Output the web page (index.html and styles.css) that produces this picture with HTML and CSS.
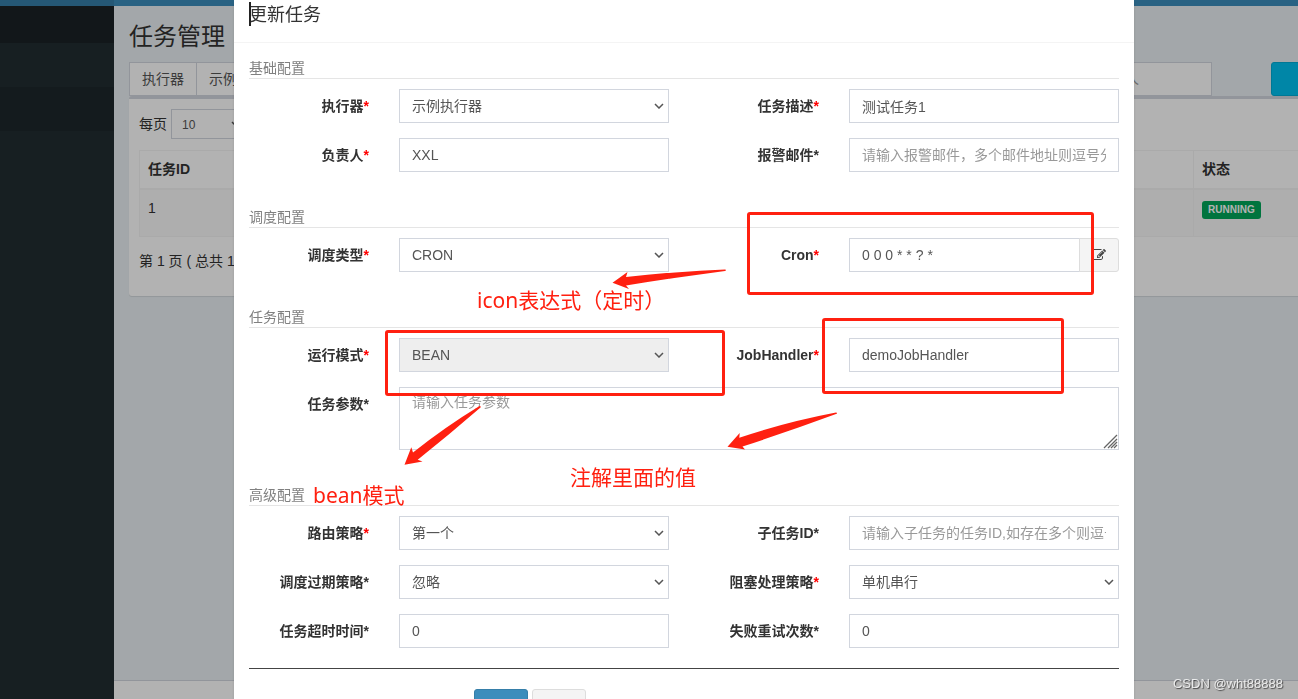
FILE: index.html
```html
<!DOCTYPE html>
<html lang="zh-CN">
<head>
<meta charset="utf-8">
<title>任务管理</title>
<link rel="stylesheet" href="styles.css">
</head>
<body>
<div class="app">
  <aside class="sidebar">
    <div class="sidebar-logo"></div>
    <div class="sidebar-header"></div>
    <div class="sidebar-item"></div>
    <div class="sidebar-item active"></div>
  </aside>
  <div class="main">
    <div class="navbar"></div>
    <main class="content">
      <h1 class="page-title">任务管理</h1>
      <div class="filters">
        <div class="input-group filter-executor">
          <label class="addon" for="f-executor">执行器</label>
          <select class="control" id="f-executor"><option>示例执行器</option></select>
        </div>
        <div class="input-group filter-owner">
          <label class="addon" for="f-owner">负责人</label>
          <input class="control" id="f-owner" type="text" placeholder="请输入负责人">
        </div>
        <button class="btn btn-info" type="button" aria-label="搜索"></button>
      </div>
      <section class="box">
        <div class="page-size">
          <label for="page-size">每页</label>
          <select class="control control-sm" id="page-size"><option>10</option></select>
        </div>
        <table class="jobs">
          <thead><tr><th>任务ID</th><th class="col-status">状态</th></tr></thead>
          <tbody><tr><td>1</td><td class="col-status"><span class="badge">RUNNING</span></td></tr></tbody>
        </table>
        <p class="summary">第 1 页 ( 总共 1 页 )</p>
      </section>
    </main>
    <footer class="footer"></footer>
  </div>
</div>

<div class="backdrop">
  <div class="modal" role="dialog" aria-labelledby="modal-title">
    <header class="modal-header"><h2 class="modal-title" id="modal-title">更新任务</h2></header>
    <form class="modal-body">
      <section class="group">
        <h3 class="group-title">基础配置</h3>
        <div class="form-row">
          <label for="executor">执行器<span class="req">*</span></label>
          <div class="field"><select class="control" id="executor"><option>示例执行器</option></select></div>
          <label for="desc">任务描述<span class="req">*</span></label>
          <div class="field"><input class="control" id="desc" type="text" value="测试任务1"></div>
        </div>
        <div class="form-row">
          <label for="owner">负责人<span class="req">*</span></label>
          <div class="field"><input class="control" id="owner" type="text" value="XXL"></div>
          <label for="mail">报警邮件<span>*</span></label>
          <div class="field"><input class="control" id="mail" type="text" placeholder="请输入报警邮件，多个邮件地址则逗号分隔"></div>
        </div>
      </section>
      <section class="group">
        <h3 class="group-title">调度配置</h3>
        <div class="form-row">
          <label for="schedule">调度类型<span class="req">*</span></label>
          <div class="field"><select class="control" id="schedule"><option>CRON</option></select></div>
          <label for="cron">Cron<span class="req">*</span></label>
          <div class="field input-group">
            <input class="control" id="cron" type="text" value="0 0 0 * * ? *">
            <button class="btn btn-default btn-addon" type="button" aria-label="编辑 Cron">
              <svg class="icon" viewBox="0 0 1792 1792" aria-hidden="true"><path d="M888 1184l116-116-152-152-116 116v56h96v96h56zm440-720q-16-16-33 1l-350 350q-17 17-1 33t33-1l350-350q17-17 1-33zm80 594v190q0 119-84.500 203.500t-203.500 84.500h-832q-119 0-203.500-84.500t-84.500-203.500v-832q0-119 84.500-203.500t203.500-84.500h832q63 0 117 25 15 7 18 23 3 17-9 29l-49 49q-14 14-32 8-23-6-45-6h-832q-66 0-113 47t-47 113v832q0 66 47 113t113 47h832q66 0 113-47t47-113v-126q0-13 9-22l64-64q15-15 35-7t20 29zm-96-738l288 288-672 672h-288v-288zm444 132l-92 92-288-288 92-92q28-28 68-28t68 28l152 152q28 28 28 68t-28 68z"/></svg>
            </button>
          </div>
        </div>
      </section>
      <section class="group">
        <h3 class="group-title">任务配置</h3>
        <div class="form-row">
          <label for="mode">运行模式<span class="req">*</span></label>
          <div class="field"><select class="control" id="mode" disabled><option>BEAN</option></select></div>
          <label for="handler">JobHandler<span class="req">*</span></label>
          <div class="field"><input class="control" id="handler" type="text" value="demoJobHandler"></div>
        </div>
        <div class="form-row">
          <label for="params">任务参数<span>*</span></label>
          <div class="field field-wide"><textarea class="control" id="params" placeholder="请输入任务参数"></textarea></div>
        </div>
      </section>
      <section class="group">
        <h3 class="group-title">高级配置</h3>
        <div class="form-row">
          <label for="route">路由策略<span class="req">*</span></label>
          <div class="field"><select class="control" id="route"><option>第一个</option></select></div>
          <label for="child">子任务ID<span>*</span></label>
          <div class="field"><input class="control" id="child" type="text" placeholder="请输入子任务的任务ID,如存在多个则逗号分隔"></div>
        </div>
        <div class="form-row">
          <label for="misfire">调度过期策略<span>*</span></label>
          <div class="field"><select class="control" id="misfire"><option>忽略</option></select></div>
          <label for="block">阻塞处理策略<span class="req">*</span></label>
          <div class="field"><select class="control" id="block"><option>单机串行</option></select></div>
        </div>
        <div class="form-row">
          <label for="timeout">任务超时时间<span>*</span></label>
          <div class="field"><input class="control" id="timeout" type="text" value="0"></div>
          <label for="retry">失败重试次数<span>*</span></label>
          <div class="field"><input class="control" id="retry" type="text" value="0"></div>
        </div>
      </section>
      <div class="actions">
        <button class="btn btn-action btn-primary" type="button" aria-label="保存"></button>
        <button class="btn btn-action btn-default" type="button" aria-label="取消"></button>
      </div>
    </form>

    <div class="mark mark-cron"></div>
    <div class="mark mark-mode"></div>
    <div class="mark mark-handler"></div>
    <svg class="arrows" width="900" height="699" viewBox="234 0 900 699" aria-hidden="true">
      <path d="M612.500 282.700L627.500 272L626 277Q675 271.500 725 269.500Q727 270 725 271Q675 277.500 626 285.500L629 289Z"/>
      <path d="M404.500 464.700L411.300 447.300L413 452.500Q445 427 479.500 406Q481.500 406 480.500 407.500Q450 434 417.700 459.700L422.500 461.500Z"/>
      <path d="M727.500 446.700L739.700 433L739.300 437.700Q786 422 836 412.500Q838 413 836 414Q790 431 742.500 446.500L745 449.500Z"/>
    </svg>
    <span class="note note-cron">icon表达式（定时）</span>
    <span class="note note-handler">注解里面的值</span>
    <span class="note note-mode">bean模式</span>
  </div>
</div>
<div class="watermark">CSDN @wht88888</div>
</body>
</html>
```
FILE: styles.css
```css
* { box-sizing: border-box; }

body {
  margin: 0;
  height: 100vh;
  overflow: hidden;
  font: 14px/20px "Liberation Sans", "Noto Sans CJK SC", sans-serif;
  color: #333;
}

h1, h2, h3, p { margin: 0; font-weight: 400; }
button, input, select, textarea { font: inherit; margin: 0; }

/* Page frame */
.app { display: flex; height: 100vh; }
.sidebar { flex: 0 0 114px; background: #222d32; }
.sidebar-logo { height: 6px; background: #367fa9; }
.sidebar-header { height: 37px; background: #1a2226; }
.sidebar-item { height: 44px; }
.sidebar-item.active { background: #1e282c; }

.main {
  flex: 1;
  min-width: 0;
  display: flex;
  flex-direction: column;
  overflow: hidden;
  background: #eaf0f4;
}
.navbar { height: 6px; background: #3c8dbc; }
.content { flex: 1; padding: 18px 15px 0; margin-right: -115px; }
.page-title { font-size: 24px; line-height: 26px; margin-bottom: 12px; }
.footer { height: 19px; background: #fff; border-top: 1px solid #d2d6de; }

/* Controls */
.control {
  display: block;
  width: 100%;
  height: 34px;
  padding: 6px 12px;
  border: 1px solid #d2d6de;
  border-radius: 0;
  background: #fff;
  color: #555;
  outline: 0;
}
select.control {
  appearance: none;
  background-image: url("data:image/svg+xml,%3Csvg xmlns='http://www.w3.org/2000/svg' width='10' height='6'%3E%3Cpath d='M1 1L5 5L9 1' stroke='%23555' stroke-width='1.500' fill='none'/%3E%3C/svg%3E");
  background-repeat: no-repeat;
  background-position: right 4px center;
}
.control::placeholder { color: #999; opacity: 1; }
.control:disabled { background-color: #eee; opacity: 1; }
select.control-sm { width: 75px; height: 30px; font-size: 12px; padding: 5px 10px; }
textarea.control { height: 63px; padding: 4px 12px; resize: vertical; }
textarea.control::-webkit-resizer {
  background: url("data:image/svg+xml,%3Csvg xmlns='http://www.w3.org/2000/svg' width='15' height='15'%3E%3Cpath d='M1 14L14 1M5 14L14 5M8 14L14 8M11 14L14 11' stroke='%23666' stroke-width='1.300' fill='none'/%3E%3C/svg%3E") no-repeat right bottom;
}

.btn {
  height: 34px;
  padding: 6px 12px;
  border: 1px solid;
  border-radius: 3px;
}
.btn-info { width: 127px; background: #00c0ef; border-color: #00acd6; }
.btn-action { width: 54px; }
.btn-primary { background: #3c8dbc; border-color: #367fa9; color: #fff; }
.btn-default { background: #f4f4f4; border-color: #ddd; color: #444; }
.btn-addon { flex: none; margin-left: -1px; border-radius: 0 3px 3px 0; }
.icon { display: block; width: 14px; height: 14px; fill: #444; }

.input-group { display: flex; }
.input-group .control { flex: 1; min-width: 0; }
.addon {
  padding: 6px 12px;
  border: 1px solid #d2d6de;
  border-right: 0;
  background: #fff;
  color: #555;
}

/* Job list */
.filters { display: flex; }
.filter-executor { width: 280px; }
.filter-owner { width: 237px; margin-left: auto; margin-right: 59px; }
.box {
  padding: 10px 10px 25px;
  border-top: 3px solid #d2d6de;
  border-radius: 3px;
  background: #fff;
  box-shadow: 0 1px 1px rgba(0, 0, 0, .1);
}
.page-size { display: flex; align-items: center; gap: 4px; margin-bottom: 11px; }
.jobs {
  width: 100%;
  table-layout: fixed;
  border-collapse: collapse;
  text-align: left;
}
.jobs th, .jobs td { border: 1px solid #f4f4f4; padding: 8px; vertical-align: top; }
.jobs th { height: 38px; border-bottom-width: 2px; }
.jobs td { height: 48px; background: #f9f9f9; }
.jobs .col-status { width: 194px; }
.badge {
  display: inline-block;
  margin-top: 3px;
  padding: 0 6px;
  border-radius: 3px;
  background: #00a65a;
  color: #fff;
  font-size: 10px;
  font-weight: 700;
  line-height: 18px;
}
.summary { margin-top: 14px; }

/* Dialog */
.backdrop {
  position: fixed;
  inset: 0;
  padding-left: 70px;
  background: rgba(0, 0, 0, .3);
  overflow: hidden;
}
.modal {
  position: relative;
  width: 100%;
  max-width: 900px;
  margin: 0 auto;
  background: #fff;
  box-shadow: 0 2px 3px rgba(0, 0, 0, .125);
}
.modal-header { padding: 2px 15px 14px; border-bottom: 1px solid #f4f4f4; }
.modal-title { position: relative; font-size: 18px; line-height: 26px; }
.modal-title::before {
  content: "";
  position: absolute;
  left: 0;
  top: 0;
  width: 2px;
  height: 24px;
  background: #222;
}
.modal-body { padding: 15px; }
.group { margin-bottom: 35px; }
.group:nth-of-type(4) { margin-bottom: 20px; }
.group-title {
  margin-bottom: 10px;
  border-bottom: 1px solid #e5e5e5;
  color: #808080;
  font-size: 14px;
  line-height: 20px;
}
.form-row {
  display: grid;
  grid-template-columns: 2fr 4fr 2fr 4fr;
  margin: 0 -15px;
}
.form-row + .form-row { margin-top: 15px; }
.form-row label { padding: 7px 15px 0; text-align: right; font-weight: 700; }
.req { color: #f00; }
.field { min-width: 0; padding: 0 15px; }
.field-wide { grid-column: span 3; }
.actions {
  display: flex;
  justify-content: center;
  gap: 4px;
  padding: 20px 0;
  padding-right: 308px;
  border-top: 1px solid #444;
}

/* Annotations drawn over the dialog */
.mark { position: absolute; border: 3px solid #ff2010; border-radius: 3px; }
.mark-cron { left: 513px; top: 212px; width: 347px; height: 83px; }
.mark-mode { left: 151px; top: 330px; width: 340px; height: 66px; }
.mark-handler { left: 588px; top: 318px; width: 242px; height: 76px; }
.arrows { position: absolute; left: 0; top: 0; fill: #ff2010; pointer-events: none; }
.note {
  position: absolute;
  color: #ff2010;
  font: 21px/30px "Noto Sans", "Noto Sans CJK SC", sans-serif;
  white-space: nowrap;
}
.note-cron { left: 243px; top: 285px; }
.note-handler { left: 336px; top: 462px; }
.note-mode { left: 79px; top: 480px; }

.watermark {
  position: fixed;
  right: 15px;
  bottom: 5px;
  color: rgba(255, 255, 255, .8);
  font-size: 13px;
  text-shadow: 1px 1px 1px rgba(0, 0, 0, .6);
}
```
